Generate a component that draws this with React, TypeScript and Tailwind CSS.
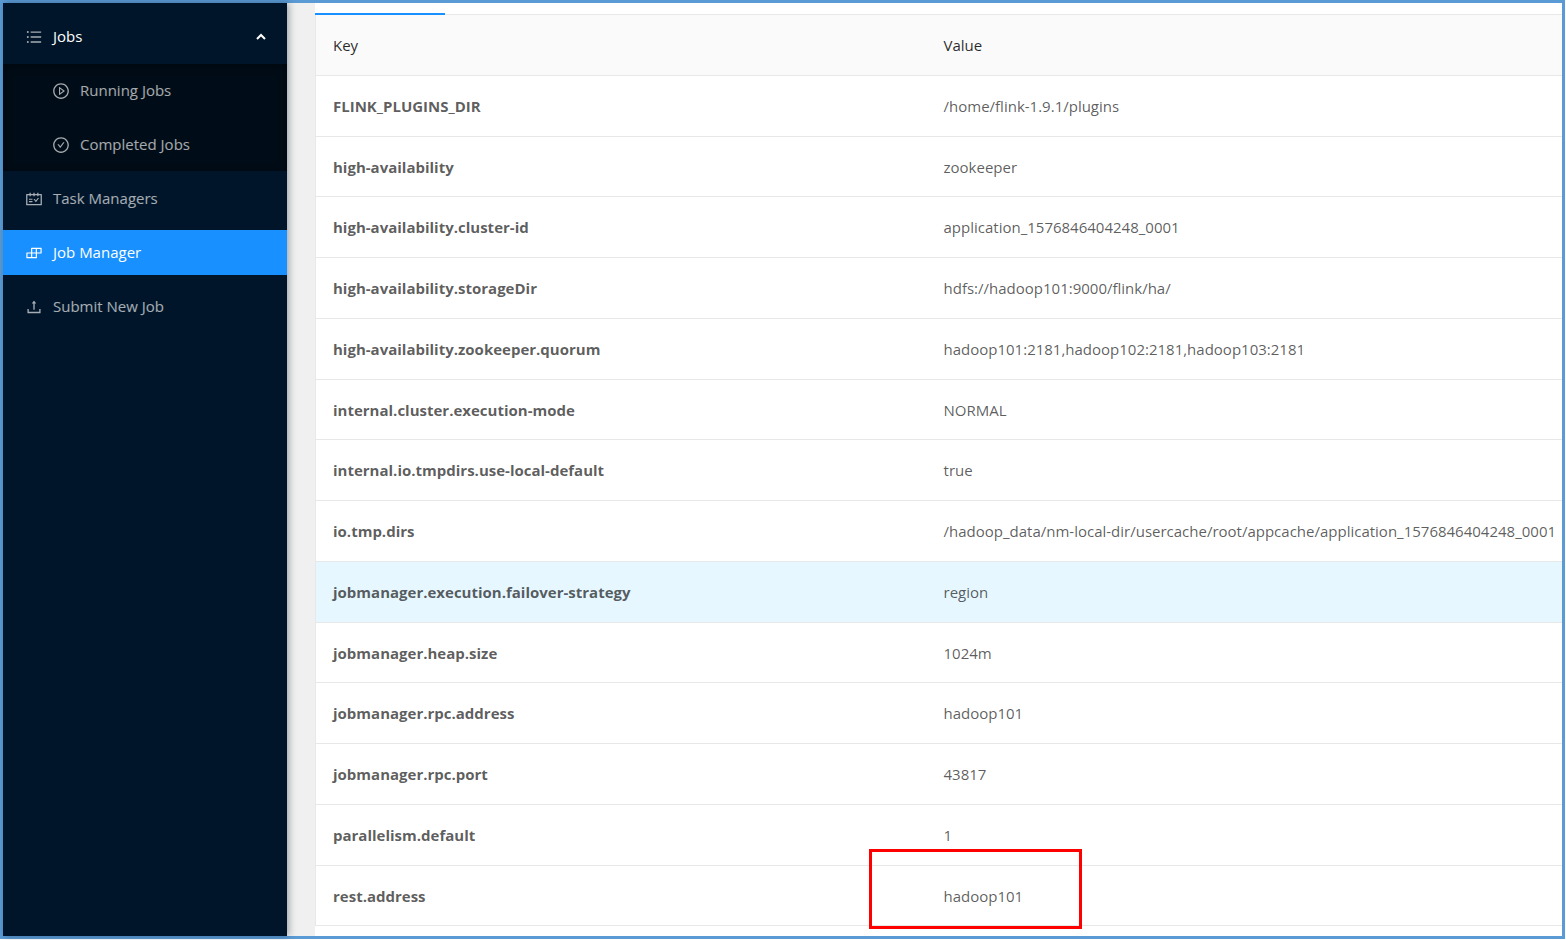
import type { IconType } from "react-icons";
import {
  AiOutlineBuild,
  AiOutlineCheckCircle,
  AiOutlinePlayCircle,
  AiOutlineSchedule,
  AiOutlineUnorderedList,
  AiOutlineUpload,
} from "react-icons/ai";
import clsx from "clsx";

type ConfigEntry = {
  key: string;
  value: string;
  hovered?: boolean;
  marked?: boolean;
};

const config: ConfigEntry[] = [
  { key: "FLINK_PLUGINS_DIR", value: "/home/flink-1.9.1/plugins" },
  { key: "high-availability", value: "zookeeper" },
  { key: "high-availability.cluster-id", value: "application_1576846404248_0001" },
  { key: "high-availability.storageDir", value: "hdfs://hadoop101:9000/flink/ha/" },
  {
    key: "high-availability.zookeeper.quorum",
    value: "hadoop101:2181,hadoop102:2181,hadoop103:2181",
  },
  { key: "internal.cluster.execution-mode", value: "NORMAL" },
  { key: "internal.io.tmpdirs.use-local-default", value: "true" },
  {
    key: "io.tmp.dirs",
    value: "/hadoop_data/nm-local-dir/usercache/root/appcache/application_1576846404248_0001",
  },
  { key: "jobmanager.execution.failover-strategy", value: "region", hovered: true },
  { key: "jobmanager.heap.size", value: "1024m" },
  { key: "jobmanager.rpc.address", value: "hadoop101" },
  { key: "jobmanager.rpc.port", value: "43817" },
  { key: "parallelism.default", value: "1" },
  { key: "rest.address", value: "hadoop101", marked: true },
];

type MenuLinkProps = {
  icon: IconType;
  label: string;
  nested?: boolean;
  active?: boolean;
};

function MenuLink({ icon: Icon, label, nested = false, active = false }: MenuLinkProps) {
  return (
    <a
      href="#"
      className={clsx(
        "flex h-[45px] items-center gap-[10px]",
        nested ? "pl-[49px]" : "pl-[22px]",
        active ? "bg-[#1890ff] text-white" : "text-white/65 hover:text-white",
      )}
    >
      <Icon className="size-[18px]" />
      <span className="pb-0.5">{label}</span>
    </a>
  );
}

function Sidebar() {
  return (
    <nav className="z-10 w-[284px] shrink-0 bg-[#001529] pt-[11px] shadow-[2px_0_7px_rgba(0,21,41,0.35)]">
      <button
        type="button"
        aria-expanded="true"
        className="mb-[5px] flex h-[45px] w-full items-center gap-[10px] pr-5 pl-[22px] text-white"
      >
        <AiOutlineUnorderedList className="size-[18px] opacity-65" />
        <span className="pb-0.5">Jobs</span>
        <svg viewBox="0 0 12 8" className="ml-auto h-2 w-3" fill="none" stroke="currentColor">
          <path d="M2 6l4-4 4 4" strokeWidth="2" />
        </svg>
      </button>
      <div className="flex flex-col gap-[9px] bg-[#000c17] py-1 shadow-[inset_0_2px_8px_rgba(0,0,0,0.45)]">
        <MenuLink icon={AiOutlinePlayCircle} label="Running Jobs" nested />
        <MenuLink icon={AiOutlineCheckCircle} label="Completed Jobs" nested />
      </div>
      <div className="mt-[5px] flex flex-col gap-[9px]">
        <MenuLink icon={AiOutlineSchedule} label="Task Managers" />
        <MenuLink icon={AiOutlineBuild} label="Job Manager" active />
        <MenuLink icon={AiOutlineUpload} label="Submit New Job" />
      </div>
    </nav>
  );
}

function ConfigTable() {
  return (
    <table className="w-full table-fixed border-separate border-spacing-0 border-l border-[#e8e8e8] text-left">
      <thead>
        <tr className="h-[61px] bg-[#fafafa] text-black/85">
          <th className="w-[49%] border-b border-[#e8e8e8] px-[17px] font-normal">Key</th>
          <th className="border-b border-[#e8e8e8] px-[17px] font-normal">Value</th>
        </tr>
      </thead>
      <tbody>
        {config.map((entry) => (
          <tr
            key={entry.key}
            className={clsx("h-[61px] nth-[4n+2]:h-[60px]", entry.hovered && "bg-[#e6f7ff]")}
          >
            <th scope="row" className="border-b border-[#e8e8e8] px-[17px] font-bold">
              {entry.key}
            </th>
            <td className="relative border-b border-[#e8e8e8] pl-[17px] whitespace-nowrap">
              {entry.value}
              {entry.marked && (
                <span className="absolute -top-[17px] -left-[58px] h-20 w-[213px] border-3 border-[#ff0000]" />
              )}
            </td>
          </tr>
        ))}
      </tbody>
    </table>
  );
}

export default function App() {
  return (
    <div className="flex min-h-screen bg-white pr-px pb-px font-['Open_Sans','Noto_Sans',sans-serif] text-[15px] leading-6 text-black/65">
      <div className="flex min-w-0 flex-1 border-3 border-[#5b9bd5]">
        <Sidebar />
        <main className="min-w-0 flex-1 bg-[#f0f0f0] pl-7">
          <div className="h-full bg-white">
            <div className="flex h-3 items-end border-b border-[#e8e8e8]">
              <div className="-mb-px h-0.5 w-[130px] bg-[#1890ff]" />
            </div>
            <ConfigTable />
          </div>
        </main>
      </div>
    </div>
  );
}
